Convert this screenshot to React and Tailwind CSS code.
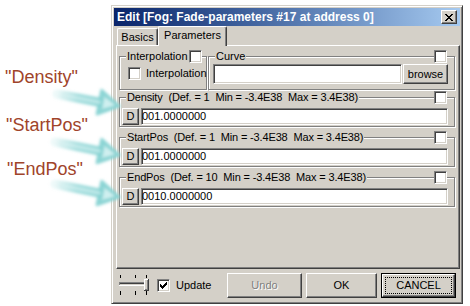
import React from 'react';

const raised =
  'bg-[#d4d0c8] border border-t-white border-l-white border-b-[#404040] border-r-[#404040] shadow-[inset_-1px_-1px_0_#808080]';
const sunken =
  'bg-white border border-t-[#808080] border-l-[#808080] border-b-white border-r-white shadow-[inset_1px_1px_0_#404040,inset_-1px_-1px_0_#d4d0c8]';
const etched = 'border border-[#808080] shadow-[1px_1px_0_#fff,inset_1px_1px_0_#fff]';

function Check({ checked }) {
  return (
    <span className={'inline-flex w-[13px] h-[13px] shrink-0 items-center justify-center ' + sunken}>
      {checked && (
        <svg width="7" height="7" viewBox="0 0 7 7" shapeRendering="crispEdges">
          <path d="M6 0h1v1h-1zM5 1h2v1h-2zM0 2h1v1h-1zM4 2h3v1h-3zM0 3h2v1h-2zM3 3h3v1h-3zM0 4h5v1h-5zM1 5h3v1h-3zM2 6h1v1h-1z" fill="#000" />
        </svg>
      )}
    </span>
  );
}

function CloseBtn() {
  const rows = [
    [0, 1, 6, 7],
    [1, 2, 5, 6],
    [2, 3, 4, 5],
    [3, 4],
    [2, 3, 4, 5],
    [1, 2, 5, 6],
    [0, 1, 6, 7],
  ];
  return (
    <span className={'w-[16px] h-[14px] shrink-0 flex items-center justify-center ' + raised}>
      <svg width="8" height="7" viewBox="0 0 8 7" shapeRendering="crispEdges">
        {rows.map((r, y) => r.map((x) => <rect key={y + '-' + x} x={x} y={y} width="1" height="1" fill="#000" />))}
      </svg>
    </span>
  );
}

function Group({ label, extra, rightCheck, className = '', labelClass = '', children }) {
  return (
    <div className={etched + ' ' + className}>
      <div className="flex items-center h-[13px] -mt-[7px]">
        <span className={'ml-[6px] px-[1px] bg-[#d4d0c8] leading-[13px] whitespace-pre ' + labelClass}>{label}</span>
        {extra}
        {rightCheck && (
          <span className="ml-auto mr-[7px] flex">
            <Check />
          </span>
        )}
      </div>
      {children}
    </div>
  );
}

function ParamGroup({ label, value, first }) {
  return (
    <Group
      label={label}
      rightCheck
      labelClass="tracking-[-0.15px]"
      className={(first ? 'mt-[7px]' : 'mt-[10px]') + ' pb-[1px]'}
    >
      <div className="flex mt-[4px] h-[17px] pl-[2px] pr-[6px] gap-[2px]">
        <span className={'w-[17px] h-[17px] flex items-center justify-center ' + raised}>D</span>
        <span className={'flex-1 h-[17px] flex items-center whitespace-pre ' + sunken}>{value}</span>
      </div>
    </Group>
  );
}

function Trackbar() {
  return (
    <svg width="31" height="21" viewBox="0 0 31 21" shapeRendering="crispEdges" className="mt-[2px] shrink-0">
      {[1, 16, 27].map((x) => (
        <rect key={'t' + x} x={x} y="0" width="1" height="3" fill="#000" />
      ))}
      {[1, 16, 27].map((x) => (
        <rect key={'b' + x} x={x} y="16" width="1" height="4" fill="#000" />
      ))}
      <rect x="0" y="7" width="27" height="4" fill="#fff" />
      <rect x="0" y="7" width="26" height="1" fill="#808080" />
      <rect x="0" y="7" width="1" height="3" fill="#808080" />
      <rect x="1" y="8" width="25" height="1" fill="#404040" />
      <rect x="1" y="9" width="25" height="1" fill="#d4d0c8" />
      <rect x="25" y="4" width="5" height="11" fill="#d4d0c8" />
      <rect x="25" y="4" width="5" height="1" fill="#fff" />
      <rect x="25" y="4" width="1" height="11" fill="#fff" />
      <rect x="29" y="4" width="1" height="12" fill="#404040" />
      <rect x="25" y="15" width="5" height="1" fill="#404040" />
      <rect x="28" y="5" width="1" height="10" fill="#808080" />
      <rect x="26" y="14" width="3" height="1" fill="#808080" />
    </svg>
  );
}

function Arrow({ id, tail, tip }) {
  const dx = tip[0] - tail[0];
  const dy = tip[1] - tail[1];
  const L = Math.hypot(dx, dy);
  const ux = dx / L;
  const uy = dy / L;
  const bx = tip[0] - ux * 20;
  const by = tip[1] - uy * 20;
  const px = -uy;
  const py = ux;
  const w = 12;
  const pts = `${bx + px * w},${by + py * w} ${tip[0]},${tip[1]} ${bx - px * w},${by - py * w}`;
  const w2 = 6;
  const bx2 = tip[0] - ux * 16;
  const by2 = tip[1] - uy * 16;
  const pts2 = `${bx2 + px * w2},${by2 + py * w2} ${tip[0] - ux * 4},${tip[1] - uy * 4} ${bx2 - px * w2},${by2 - py * w2}`;
  return (
    <g>
      <defs>
        <linearGradient id={id} gradientUnits="userSpaceOnUse" x1={tail[0]} y1={tail[1]} x2={bx} y2={by}>
          <stop offset="0" stopColor="#86d3d3" stopOpacity="0.15" />
          <stop offset="0.5" stopColor="#86d3d3" stopOpacity="0.8" />
          <stop offset="1" stopColor="#86d3d3" stopOpacity="0.95" />
        </linearGradient>
      </defs>
      <g filter="url(#glow)">
        <line x1={tail[0]} y1={tail[1]} x2={bx + ux * 3} y2={by + uy * 3} stroke={`url(#${id})`} strokeWidth="9" strokeLinecap="round" />
        <polygon points={pts} fill="#86d3d3" fillOpacity="0.9" stroke="#86d3d3" strokeOpacity="0.9" strokeWidth="3" strokeLinejoin="round" />
        <line x1={tail[0] + ux * 10} y1={tail[1] + uy * 10} x2={bx} y2={by} stroke="#d8f4f4" strokeOpacity="0.7" strokeWidth="3" strokeLinecap="round" />
        <polygon points={pts2} fill="#e0f6f6" fillOpacity="0.8" />
      </g>
    </g>
  );
}

function Dialog() {
  return (
    <div className="mt-[5px] w-[352px] h-[299px] shrink-0 bg-[#d4d0c8] border border-t-[#d4d0c8] border-l-[#d4d0c8] border-b-[#404040] border-r-[#404040] shadow-[inset_1px_1px_0_#fff,inset_-1px_-1px_0_#808080] p-[2px] flex flex-col text-[11px] leading-[13px] text-black">
      {/* title bar */}
      <div className="h-[18px] shrink-0 flex items-center bg-linear-to-r from-[#0a246a] to-[#a6caf0] pl-[3px] pr-[3px]">
        <span className="flex-1 text-white font-bold text-[12px] leading-[14px] whitespace-nowrap">
          Edit [Fog: Fade-parameters #17 at address 0]
        </span>
        <CloseBtn />
      </div>

      {/* tabs */}
      <div className="h-[19px] shrink-0 flex items-end pl-[3px]">
        <div className="h-[17px] w-[41px] flex justify-center pt-[2px] bg-[#d4d0c8] border-t border-l border-t-white border-l-white border-r border-r-[#404040] shadow-[inset_-1px_0_0_#808080] rounded-t-[2px]">
          Basics
        </div>
        <div className="relative z-10 h-[20px] w-[69px] -mb-[1px] flex justify-center pt-[2px] bg-[#d4d0c8] border-t border-l border-t-white border-l-white border-r border-r-[#404040] shadow-[inset_-1px_0_0_#808080] rounded-t-[2px]">
          Parameters
        </div>
      </div>

      {/* panel */}
      <div className="ml-[2px] h-[224px] shrink-0 flex flex-col border border-t-white border-l-white border-b-[#404040] border-r-[#404040] shadow-[inset_-1px_-1px_0_#808080] pt-[10px] pl-[2px] pr-[4px]">
        <div className="flex gap-[1px]">
          <Group
            label="Interpolation"
            className="w-[88px] shrink-0"
            extra={
              <span className="flex">
                <Check />
              </span>
            }
          >
            <div className="flex items-center mt-[4px] ml-[8px] gap-[5px]">
              <Check />
              <span className="whitespace-nowrap">Interpolation</span>
            </div>
          </Group>
          <Group label="Curve" rightCheck className="flex-1 pb-[5px]">
            <div className="flex mt-[1px] h-[20px] pl-[4px] pr-[6px] gap-[1px]">
              <span className={'flex-1 h-[20px] ' + sunken}></span>
              <span className={'w-[45px] h-[20px] flex items-center justify-center ' + raised}>browse</span>
            </div>
          </Group>
        </div>
        <ParamGroup first label="Density  (Def. = 1  Min = -3.4E38  Max = 3.4E38)" value="001.0000000" />
        <ParamGroup label="StartPos  (Def. = 1  Min = -3.4E38  Max = 3.4E38)" value="001.0000000" />
        <ParamGroup label="EndPos  (Def. = 10  Min = -3.4E38  Max = 3.4E38)" value="0010.0000000" />
      </div>

      {/* footer */}
      <div className="flex-1 flex items-start pt-[4px] pl-[5px] pr-[4px]">
        <Trackbar />
        <span className="ml-[7px] mt-[6px] flex">
          <Check checked />
        </span>
        <span className="ml-[6px] mt-[6px] leading-[13px]">Update</span>
        <div className="ml-auto flex gap-[4px]">
          <span className={'w-[75px] h-[25px] flex items-center justify-center text-[#808080] [text-shadow:1px_1px_0_#fff] ' + raised}>
            Undo
          </span>
          <span className={'w-[71px] h-[25px] flex items-center justify-center ' + raised}>OK</span>
          <span className="w-[75px] h-[25px] flex border border-black">
            <span className={'flex-1 flex ' + raised}>
              <span className="flex-1 m-[2px] border border-dotted border-black flex items-center justify-center">
                CANCEL
              </span>
            </span>
          </span>
        </div>
      </div>
    </div>
  );
}

export default function App() {
  return (
    <div className="relative w-[470px] h-[306px] bg-white flex overflow-hidden font-['Liberation_Sans',Arial,sans-serif]">
      <div className="w-[111px] shrink-0 flex flex-col text-[18px] leading-[20px] text-[#a0442a]">
        <div className="mt-[67px] pl-[5px] whitespace-nowrap">"Density"</div>
        <div className="mt-[28px] pl-[6px] whitespace-nowrap">"StartPos"</div>
        <div className="mt-[24px] pl-[7px] whitespace-nowrap">"EndPos"</div>
      </div>
      <Dialog />
      <svg className="absolute inset-0 pointer-events-none" width="470" height="306" viewBox="0 0 470 306">
        <defs>
          <filter id="glow" x="-20%" y="-50%" width="140%" height="200%">
            <feGaussianBlur stdDeviation="1.8" />
          </filter>
        </defs>
        <Arrow id="g1" tail={[57, 94]} tip={[119, 106]} />
        <Arrow id="g2" tail={[55, 142]} tip={[119, 155]} />
        <Arrow id="g3" tail={[55, 184]} tip={[119, 197]} />
      </svg>
    </div>
  );
}
